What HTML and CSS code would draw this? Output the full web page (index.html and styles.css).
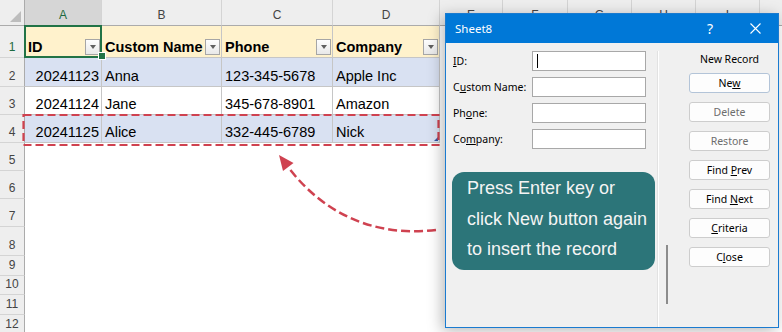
FILE: index.html
```html
<!DOCTYPE html>
<html>
<head>
    <title>Data form - Sheet8</title>
    <meta http-equiv="Content-Type" content="text/html; charset=utf-8"/>
    <link rel="stylesheet" href="styles.css">
</head>
<body>
<div class="screen">
    <div class="sheet">
        <div class="corner"></div>
        <div class="colhead sel">A</div>
        <div class="colhead">B</div>
        <div class="colhead">C</div>
        <div class="colhead">D</div>
        <div class="colhead">E</div>
        <div class="colhead">F</div>
        <div class="colhead">G</div>
        <div class="colhead">H</div>
        <div class="colhead">I</div>
        <div class="colhead"></div>

        <div class="rowhead sel">1</div>
        <div class="cell th a1"><span>ID</span><i class="filter"></i></div>
        <div class="cell th"><span>Custom Name</span><i class="filter"></i></div>
        <div class="cell th"><span>Phone</span><i class="filter"></i></div>
        <div class="cell th"><span>Company</span><i class="filter"></i></div>
        <div class="void right"></div>

        <div class="rowhead">2</div>
        <div class="cell band num">20241123</div>
        <div class="cell band">Anna</div>
        <div class="cell band">123-345-5678</div>
        <div class="cell band">Apple Inc</div>
        <div class="void right"></div>

        <div class="rowhead">3</div>
        <div class="cell num">20241124</div>
        <div class="cell">Jane</div>
        <div class="cell">345-678-8901</div>
        <div class="cell">Amazon</div>
        <div class="void right"></div>

        <div class="rowhead">4</div>
        <div class="cell band num">20241125</div>
        <div class="cell band">Alice</div>
        <div class="cell band">332-445-6789</div>
        <div class="cell band last">Nick</div>
        <div class="void right"></div>

        <div class="rowhead">5</div><div class="void"></div>
        <div class="rowhead">6</div><div class="void"></div>
        <div class="rowhead">7</div><div class="void"></div>
        <div class="rowhead">8</div><div class="void"></div>
        <div class="rowhead">9</div><div class="void"></div>
        <div class="rowhead">10</div><div class="void"></div>
        <div class="rowhead">11</div><div class="void"></div>
        <div class="rowhead">12</div><div class="void"></div>
    </div>

    <!-- annotation: new row outline and arrow from the tip -->
    <svg class="marks" width="782" height="332" viewBox="0 0 782 332">
        <rect x="23.5" y="115" width="415" height="30" fill="none" stroke="#cf4250" stroke-width="2.2" stroke-dasharray="8 4"/>
        <path d="M436,230 C385,236 330,222 288,167" fill="none" stroke="#cf4250" stroke-width="2.5" stroke-dasharray="9 4"/>
        <polygon points="279,155 293.5,163 283,171" fill="#cf4250"/>
    </svg>

    <div class="dialog">
        <div class="titlebar">
            <span class="title">Sheet8</span>
            <span class="help">?</span>
            <span class="close">
                <svg width="11" height="11" viewBox="0 0 11 11">
                    <path d="M0.5,0.5 L10.5,10.5 M10.5,0.5 L0.5,10.5" stroke="#fff" stroke-width="1.1" fill="none"/>
                </svg>
            </span>
        </div>
        <div class="dbody">
            <div class="fields">
                <div class="form">
                    <label><u>I</u>D:</label>
                    <div class="field"><span class="caret"></span></div>
                    <label>C<u>u</u>stom Name:</label>
                    <div class="field"></div>
                    <label>Ph<u>o</u>ne:</label>
                    <div class="field"></div>
                    <label>Co<u>m</u>pany:</label>
                    <div class="field"></div>
                </div>
                <div class="callout">
                    Press Enter key or<br>
                    click New button again<br>
                    to insert the record
                </div>
            </div>
            <div class="sep"></div>
            <div class="track"><div class="thumb"></div></div>
            <div class="actions">
                <div class="cap">New Record</div>
                <div class="btn def"><span>Ne<u>w</u></span></div>
                <div class="btn off"><span>Delete</span></div>
                <div class="btn off"><span>Restore</span></div>
                <div class="btn gap"><span>Find <u>P</u>rev</span></div>
                <div class="btn"><span>Find <u>N</u>ext</span></div>
                <div class="btn"><span><u>C</u>riteria</span></div>
                <div class="btn gap"><span>C<u>l</u>ose</span></div>
            </div>
        </div>
    </div>
</div>
</body>
</html>
```

FILE: styles.css
```css
body {
    margin: 0;
    font-family: "Liberation Sans", Arial, sans-serif;
}

.screen {
    position: relative;
    width: 782px;
    height: 332px;
    overflow: hidden;
    background-color: #fff;
}

/* spreadsheet */

.sheet {
    display: grid;
    grid-template-columns: 25px 77px 120px 111px 107px 63px 65px 64px 64px 64px 64px;
    grid-template-rows: 26px 32px 29px 28px 28px 28px 28px 28px 29px 20px 19px 20px 20px;
}

.sheet > div {
    box-sizing: border-box;
    min-width: 0;
}

.corner {
    position: relative;
    background-color: #eeeeee;
    border-right: 1px solid #ababab;
    border-bottom: 1px solid #ababab;
}

.corner::after {
    content: "";
    position: absolute;
    right: 3px;
    bottom: 3px;
    border-left: 11px solid transparent;
    border-bottom: 11px solid #bdbdbd;
}

.colhead {
    display: flex;
    justify-content: center;
    align-items: center;
    padding-top: 4px;
    background-color: #eeeeee;
    border-right: 1px solid #d4d4d4;
    border-bottom: 1px solid #ababab;
    font-size: 12px;
    color: #444;
}

.colhead.sel {
    background-color: #d6d6d6;
    color: #1d6a40;
}

.rowhead {
    display: flex;
    justify-content: center;
    align-items: flex-end;
    padding-bottom: 3px;
    background-color: #eeeeee;
    border-right: 1px solid #ababab;
    border-bottom: 1px solid #d4d4d4;
    font-size: 12px;
    line-height: 14px;
    color: #444;
}

.rowhead.sel {
    color: #1d6a40;
}

.cell {
    display: flex;
    align-items: flex-end;
    padding: 0 2px 1px 3px;
    border-right: 1px solid #c6c6c6;
    border-bottom: 1px solid #c6c6c6;
    font-size: 14.5px;
    line-height: 17px;
    white-space: nowrap;
    overflow: hidden;
    color: #000;
}

.num {
    justify-content: flex-end;
}

.th {
    justify-content: space-between;
    padding-right: 1px;
    background-color: #fff2cc;
    font-weight: bold;
}

.band {
    background-color: #d9e1f2;
}

.a1 {
    position: relative;
    overflow: visible;
}

.a1::before {
    content: "";
    position: absolute;
    top: -1px;
    left: -1px;
    right: -1px;
    bottom: -1px;
    border: 2px solid #217346;
}

.a1::after {
    content: "";
    position: absolute;
    right: -4px;
    bottom: -2px;
    width: 6px;
    height: 6px;
    background-color: #217346;
    box-shadow: 0 0 0 1px #fff;
}

.last {
    position: relative;
}

.last::after {
    content: "";
    position: absolute;
    right: 1px;
    bottom: 1px;
    border-left: 4px solid transparent;
    border-bottom: 4px solid #3456a8;
}

.filter {
    display: flex;
    flex: none;
    align-items: center;
    justify-content: center;
    width: 15px;
    height: 16px;
    margin-bottom: 1px;
    box-sizing: border-box;
    border: 1px solid #a6a6a6;
    background: linear-gradient(#fdfdfd, #e8e8e8);
}

.filter::after {
    content: "";
    border-left: 3.5px solid transparent;
    border-right: 3.5px solid transparent;
    border-top: 4px solid #5f5f5f;
}

.void {
    grid-column: 2 / -1;
}

.void.right {
    grid-column: 6 / -1;
}

.marks {
    position: absolute;
    top: 0;
    left: 0;
    pointer-events: none;
}

/* data form dialog */

.dialog {
    position: absolute;
    left: 445px;
    top: 13px;
    width: 334px;
    height: 315px;
    box-sizing: border-box;
    display: flex;
    flex-direction: column;
    border: 1px solid #1a7bd0;
    background-color: #f0f0f0;
    box-shadow: -3px 3px 14px rgba(0, 0, 0, 0.28);
    font-family: "Noto Sans", sans-serif;
    color: #000;
}

.titlebar {
    display: flex;
    flex: none;
    align-items: center;
    height: 29px;
    padding-left: 9px;
    background-color: #0078d7;
    color: #fff;
    font-size: 11.5px;
}

.title {
    flex: 1;
}

.help {
    width: 30px;
    margin-right: 7px;
    text-align: center;
    font-size: 14px;
}

.close {
    display: flex;
    justify-content: center;
    width: 46px;
}

.dbody {
    display: flex;
    flex: 1;
}

.fields {
    width: 212px;
    box-sizing: border-box;
    padding: 8px 0 0 7px;
}

.form {
    display: grid;
    grid-template-columns: 79px 114px;
    grid-auto-rows: 20px;
    row-gap: 6px;
    align-items: center;
    font-size: 10.5px;
}

.field {
    height: 20px;
    box-sizing: border-box;
    border: 1px solid #a8a8a8;
    background-color: #fff;
}

.caret {
    display: block;
    width: 1px;
    height: 14px;
    margin: 2px 0 0 4px;
    background-color: #000;
}

.callout {
    width: 203px;
    margin: 23px 0 0 -1px;
    box-sizing: border-box;
    padding: 1px 6px 5px 15px;
    border-radius: 12px;
    background-color: #2c7579;
    color: #f4f4f4;
    font: 18px/30.5px "Liberation Sans", Arial, sans-serif;
}

.sep {
    width: 1px;
    margin-top: 8px;
    background-color: #fff;
    box-shadow: -1px 0 0 #e2e2e2;
}

.track {
    width: 30px;
}

.thumb {
    width: 2px;
    height: 59px;
    margin: 202px 0 0 7px;
    background-color: #8c8c8c;
}

.actions {
    width: 81px;
    padding-top: 8px;
}

.cap {
    height: 16px;
    margin-bottom: 6px;
    text-align: center;
    font-size: 10.5px;
    line-height: 16px;
}

.btn {
    display: flex;
    align-items: center;
    justify-content: center;
    height: 20px;
    margin-bottom: 9px;
    box-sizing: border-box;
    border: 1px solid #cdcdcd;
    border-radius: 3px;
    background-color: #fdfdfd;
    font-size: 10.5px;
}

.btn.def {
    border-color: #b3c4d8;
}

.btn.off {
    color: #6d6d6d;
}

.btn.gap {
    margin-top: 7px;
}
```
